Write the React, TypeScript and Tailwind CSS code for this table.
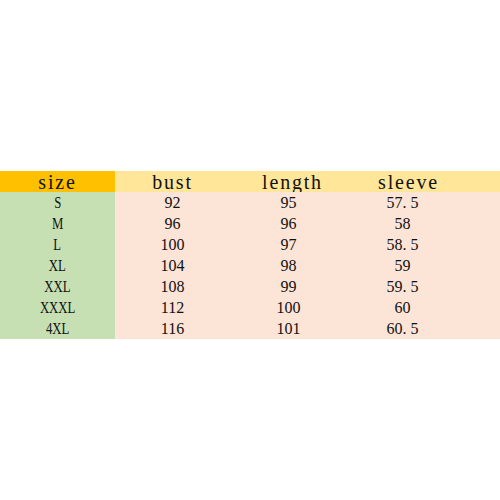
import React from "react";

const rows = [
  ["S", "92", "95", "57.5"],
  ["M", "96", "96", "58"],
  ["L", "100", "97", "58.5"],
  ["XL", "104", "98", "59"],
  ["XXL", "108", "99", "59.5"],
  ["XXXL", "112", "100", "60"],
  ["4XL", "116", "101", "60.5"],
];

function Num({ v }: { v: string }) {
  const parts = v.split(".");
  if (parts.length === 1) return <span>{v}</span>;
  return (
    <span>
      {parts[0]}
      <span className="inline-block w-[8px] text-left">.</span>
      {parts[1]}
    </span>
  );
}

export default function App() {
  return (
    <div
      className="w-[500px] h-[500px] bg-white pt-[171px] text-[#111111]"
      style={{ fontFamily: '"Liberation Serif", "DejaVu Serif", serif' }}
    >
      <div className="grid grid-cols-[115px_115px_125px_95px_1fr]">
        <div className="h-[21px] bg-[#FFC000] flex items-center justify-center text-[20px] tracking-[1.8px] leading-none">size</div>
        <div className="h-[21px] bg-[#FFE699] flex items-center justify-center text-[20px] tracking-[1.8px] leading-none">bust</div>
        <div className="h-[21px] bg-[#FFE699] flex items-center justify-center text-[20px] tracking-[1.8px] leading-none">length</div>
        <div className="h-[21px] bg-[#FFE699] flex items-center justify-center text-[20px] tracking-[1.8px] leading-none pl-[12px]">sleeve</div>
        <div className="h-[21px] bg-[#FFE699]"></div>
        {rows.map((r) => (
          <React.Fragment key={r[0]}>
            <div className="h-[21px] bg-[#C6E0B4] flex items-center justify-center text-[17px] leading-none">
              <span className="inline-block scale-x-75">{r[0]}</span>
            </div>
            <div className="h-[21px] bg-[#FCE4D6] flex items-center justify-center text-[16px] leading-none">{r[1]}</div>
            <div className="h-[21px] bg-[#FCE4D6] flex items-center justify-center text-[16px] leading-none pr-[8px]">{r[2]}</div>
            <div className="h-[21px] bg-[#FCE4D6] flex items-center justify-center text-[16px] leading-none">
              <Num v={r[3]} />
            </div>
            <div className="h-[21px] bg-[#FCE4D6]"></div>
          </React.Fragment>
        ))}
      </div>
    </div>
  );
}
